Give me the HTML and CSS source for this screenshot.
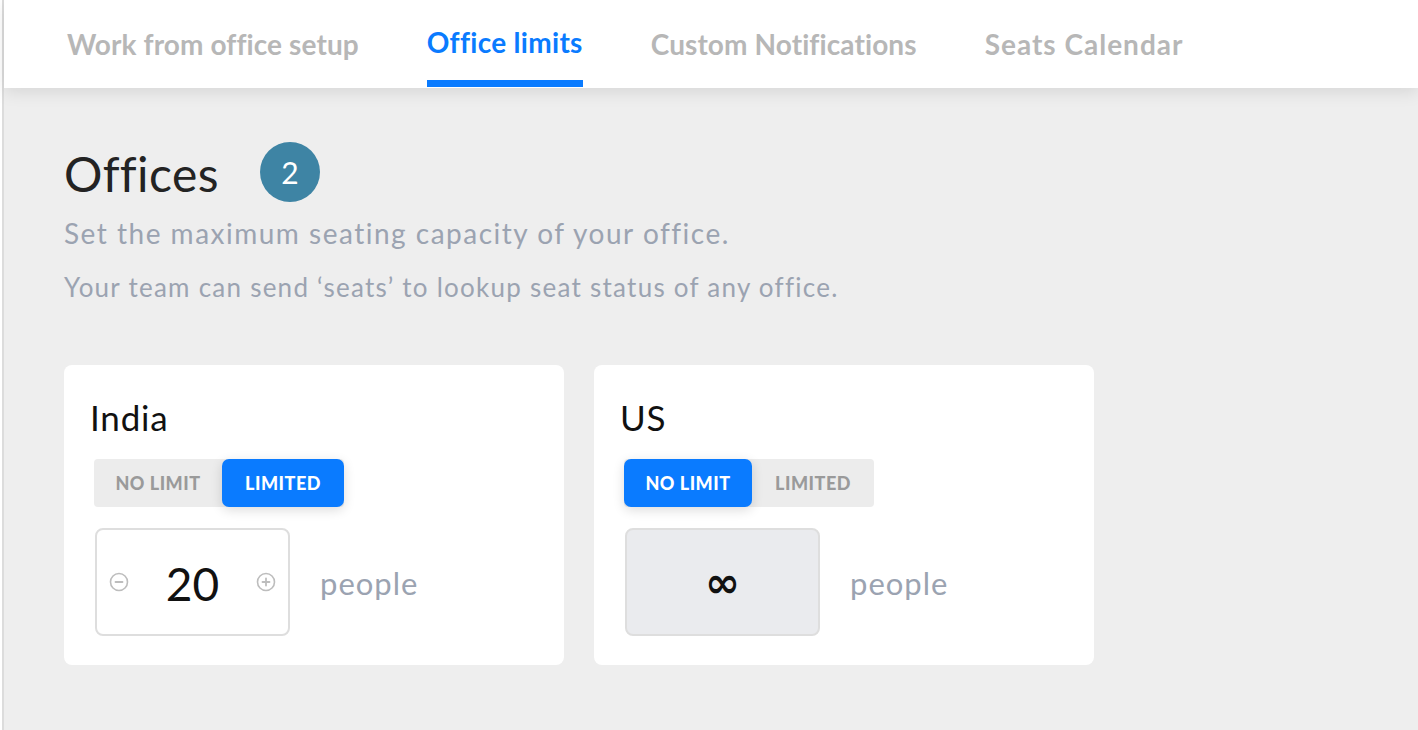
FILE: index.html
```html
<!DOCTYPE html>
<html lang="en">
<head>
<meta charset="utf-8">
<title>Office limits</title>
<link rel="stylesheet" href="styles.css">
</head>
<body>
<div class="frame">
  <header class="tabs">
    <a class="tab">Work from office setup</a>
    <a class="tab active">Office limits</a>
    <a class="tab">Custom Notifications</a>
    <a class="tab">Seats Calendar</a>
  </header>
  <main class="content">
    <div class="heading">
      <h1 class="title">Offices</h1>
      <span class="badge">2</span>
    </div>
    <p class="sub">Set the maximum seating capacity of your office.</p>
    <p class="sub small">Your team can send ‘seats’ to lookup seat status of any office.</p>
    <div class="cards">
      <section class="card">
        <h2 class="office">India</h2>
        <div class="toggle">
          <span class="seg">NO LIMIT</span>
          <span class="seg on">LIMITED</span>
        </div>
        <div class="row">
          <div class="counter">
            <svg class="step" viewBox="0 0 20 20" width="20" height="20"><circle cx="10" cy="10" r="8.5" fill="none" stroke="#bdbdbd" stroke-width="1.6"/><line x1="6.5" y1="10" x2="13.5" y2="10" stroke="#bdbdbd" stroke-width="1.8" stroke-linecap="round"/></svg>
            <span class="num">20</span>
            <svg class="step" viewBox="0 0 20 20" width="20" height="20"><circle cx="10" cy="10" r="8.5" fill="none" stroke="#bdbdbd" stroke-width="1.6"/><line x1="6.5" y1="10" x2="13.5" y2="10" stroke="#bdbdbd" stroke-width="1.8" stroke-linecap="round"/><line x1="10" y1="6.5" x2="10" y2="13.5" stroke="#bdbdbd" stroke-width="1.8" stroke-linecap="round"/></svg>
          </div>
          <span class="unit">people</span>
        </div>
      </section>
      <section class="card">
        <h2 class="office">US</h2>
        <div class="toggle">
          <span class="seg on">NO LIMIT</span>
          <span class="seg">LIMITED</span>
        </div>
        <div class="row">
          <div class="counter disabled">
            <span class="inf">∞</span>
          </div>
          <span class="unit">people</span>
        </div>
      </section>
    </div>
  </main>
</div>
</body>
</html>
```

FILE: styles.css
```css
* { box-sizing: border-box; }
html, body { margin: 0; padding: 0; }
body {
  font-family: "Lato", "Open Sans", sans-serif;
  background: #ffffff;
}
.frame {
  margin-left: 2px;
  border-left: 2px solid #dcdcdc;
  min-height: 730px;
  background: #eeeeee;
}
.tabs {
  height: 88px;
  background: #ffffff;
  display: flex;
  align-items: stretch;
  gap: 68px;
  padding-left: 63px;
  box-shadow: 0 4px 16px rgba(0,0,0,0.10);
  position: relative;
}
.tab {
  display: block;
  padding-top: 27px;
  font-size: 28px;
  line-height: normal;
  font-weight: 700;
  color: #b7b7b7;
  letter-spacing: 0.1px;
  border-bottom: 7px solid transparent;
  margin-bottom: 1px;
}
.tab:last-child { letter-spacing: 1px; }
.tab.active {
  color: #0a7bff;
  border-bottom-color: #0a7bff;
  padding-top: 25px;
  letter-spacing: 0.3px;
}
.content {
  padding: 54px 0 0 60px;
}
.heading {
  display: flex;
  align-items: flex-start;
  gap: 41px;
}
.title {
  margin: 0;
  padding-top: 2px;
  font-size: 48px;
  font-weight: 400;
  color: #232323;
  line-height: 60px;
  letter-spacing: 0.4px;
}
.badge {
  width: 60px;
  height: 60px;
  border-radius: 50%;
  background: #3e84a4;
  color: #fff;
  display: flex;
  align-items: center;
  justify-content: center;
  font-size: 30px;
}
.sub {
  margin: 9px 0 0;
  font-size: 28px;
  color: #9ba3b1;
  line-height: 40px;
  letter-spacing: 1.5px;
}
.small {
  font-size: 26px;
  margin-top: 14px;
  letter-spacing: 1.25px;
}
.cards {
  display: flex;
  gap: 30px;
  margin-top: 58px;
}
.card {
  width: 500px;
  height: 300px;
  background: #ffffff;
  border-radius: 8px;
  padding: 32px 30px 29px 30px;
}
.office {
  margin: 0 0 0 -4px;
  font-size: 35px;
  font-weight: 400;
  color: #111;
  line-height: 40px;
  letter-spacing: 0.8px;
}
.toggle {
  margin-top: 22px;
  display: inline-flex;
  height: 48px;
  background: #ececec;
  border-radius: 4px;
}
.seg {
  display: flex;
  align-items: center;
  justify-content: center;
  font-size: 18px;
  font-weight: 900;
  color: #9a9a9a;
  letter-spacing: 0.5px;
  border-radius: 7px;
}
.seg:first-child { width: 128px; }
.seg:last-child { width: 122px; }
.seg.on {
  background: #0a7bff;
  color: #ffffff;
  box-shadow: 0 3px 12px rgba(0,0,0,0.14);
}
.row {
  margin-top: 21px;
  display: flex;
  align-items: center;
  gap: 30px;
}
.counter {
  width: 195px;
  height: 108px;
  border: 2px solid #dedede;
  border-radius: 8px;
  display: flex;
  align-items: center;
  justify-content: space-between;
  padding: 0 12px 0 12px;
  margin-left: 1px;
}
.counter.disabled {
  background: #eaebee;
  justify-content: center;
}
.num {
  font-size: 46px;
  color: #111;
  margin-top: 2px;
}
.inf {
  font-family: "DejaVu Sans", sans-serif;
  font-size: 42px;
  font-weight: 700;
  color: #111;
}
.unit {
  font-size: 31px;
  color: #9ba3b1;
  letter-spacing: 1px;
  margin-top: 2px;
}
```
